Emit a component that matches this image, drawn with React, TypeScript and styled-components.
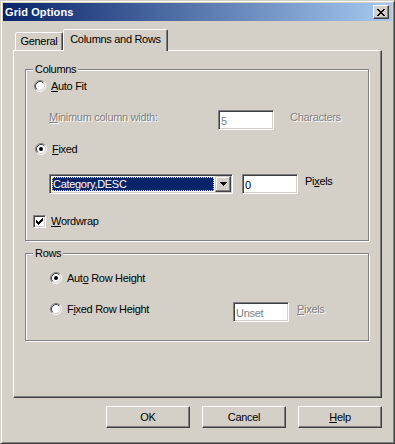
import React from "react";
import styled, { createGlobalStyle } from "styled-components";

const GlobalStyle = createGlobalStyle`
  html, body { margin: 0; padding: 0; background: #D4D0C8; }
  body { font-family: "Liberation Sans", Arial, sans-serif; font-size: 11px; }
`;

const Window = styled.div`
  width: 395px;
  height: 444px;
  box-sizing: border-box;
  border: 1px solid;
  border-color: #D4D0C8 #404040 #404040 #D4D0C8;
  box-shadow: inset 1px 1px 0 #fff, inset -1px -1px 0 #808080;
  padding: 2px;
  background: #D4D0C8;
  display: flex;
  flex-direction: column;
  font-family: "Liberation Sans", Arial, sans-serif;
  font-size: 11px;
  line-height: 13px;
  letter-spacing: -0.3px;
  color: #000;
`;

const TitleBar = styled.div`
  height: 18px;
  flex: none;
  display: flex;
  align-items: center;
  justify-content: space-between;
  padding: 0 3px 0 2px;
  background: linear-gradient(to right, #0A246A, #A6CAF0);
`;

const Title = styled.span`
  color: #fff;
  font-weight: bold;
  font-size: 11px;
  line-height: 13px;
  letter-spacing: 0.1px;
`;

const CloseButton = styled.div`
  box-sizing: border-box;
  width: 16px;
  height: 14px;
  border: 1px solid;
  border-color: #fff #404040 #404040 #fff;
  box-shadow: inset -1px -1px 0 #808080, inset 1px 1px 0 #D4D0C8;
  background: #D4D0C8;
  display: flex;
  align-items: center;
  justify-content: center;
`;

const Body = styled.div`
  flex: 1;
  display: flex;
  flex-direction: column;
  padding: 8px 10px 13px 10px;
  min-height: 0;
`;

const TabRow = styled.div`
  display: flex;
  align-items: flex-end;
  padding-left: 2px;
  flex: none;
`;

const Tab = styled.div<{ $active?: boolean; $w: number }>`
  box-sizing: border-box;
  width: ${(p) => p.$w}px;
  height: ${(p) => (p.$active ? 22 : 18)}px;
  margin-bottom: ${(p) => (p.$active ? -1 : 0)}px;
  padding-bottom: ${(p) => (p.$active ? 2 : 0)}px;
  border: 1px solid;
  border-bottom: none;
  border-color: #fff #404040 transparent #fff;
  border-radius: 2px 2px 0 0;
  box-shadow: inset -1px 0 0 #808080;
  background: #D4D0C8;
  display: flex;
  align-items: center;
  justify-content: center;
  position: relative;
  z-index: ${(p) => (p.$active ? 2 : 1)};
`;

const Panel = styled.div`
  flex: 1;
  box-sizing: border-box;
  border: 1px solid;
  border-color: #fff #404040 #404040 #fff;
  box-shadow: inset -1px -1px 0 #808080;
  padding: 18px 12px 0 11px;
  display: flex;
  flex-direction: column;
  gap: 12px;
`;

const Group = styled.div<{ $pb: number }>`
  position: relative;
  border: 1px solid #808080;
  box-shadow: inset 1px 1px 0 #fff, 1px 1px 0 #fff;
  display: flex;
  flex-direction: column;
  padding-bottom: ${(p) => p.$pb}px;
`;

const Legend = styled.span`
  position: absolute;
  top: -7px;
  left: 7px;
  padding: 0 2px;
  background: #D4D0C8;
  line-height: 13px;
`;

const Row = styled.div<{ $mt: number; $pl: number }>`
  display: flex;
  align-items: flex-start;
  margin-top: ${(p) => p.$mt}px;
  padding-left: ${(p) => p.$pl}px;
  min-height: 13px;
`;

const OptionLabel = styled.span<{ $w?: number }>`
  margin-left: 5px;
  line-height: 13px;
  white-space: nowrap;
  ${(p) => (p.$w ? `width: ${p.$w}px;` : "")}
`;

const Text = styled.span<{ $w?: number; $ml?: number; $mt?: number; $disabled?: boolean }>`
  line-height: 13px;
  white-space: nowrap;
  ${(p) => (p.$w ? `width: ${p.$w}px;` : "")}
  margin-left: ${(p) => p.$ml ?? 0}px;
  margin-top: ${(p) => p.$mt ?? 0}px;
  color: ${(p) => (p.$disabled ? "#808080" : "#000")};
  text-shadow: ${(p) => (p.$disabled ? "1px 1px 0 #fff" : "none")};
`;

const Key = styled.span`
  text-decoration: underline;
  text-underline-offset: 1px;
`;

const Field = styled.div<{ $w: number; $disabled?: boolean; $ml?: number; $mt?: number }>`
  box-sizing: border-box;
  width: ${(p) => p.$w}px;
  height: 20px;
  flex: none;
  margin-left: ${(p) => p.$ml ?? 0}px;
  margin-top: ${(p) => p.$mt ?? 0}px;
  border: 1px solid;
  border-color: #808080 #fff #fff #808080;
  box-shadow: inset 1px 1px 0 #404040, inset -1px -1px 0 #D4D0C8;
  background: #fff;
  padding: 2px 2px 0 2px;
  display: flex;
  align-items: center;
  line-height: 13px;
  color: ${(p) => (p.$disabled ? "#808080" : "#000")};
`;

const Combo = styled.div`
  box-sizing: border-box;
  width: 184px;
  height: 20px;
  flex: none;
  border: 1px solid;
  border-color: #808080 #fff #fff #808080;
  box-shadow: inset 1px 1px 0 #404040, inset -1px -1px 0 #D4D0C8;
  background: #fff;
  padding: 1px;
  display: flex;
  align-items: stretch;
`;

const ComboSelection = styled.div`
  flex: 1;
  margin: 1px;
  box-sizing: border-box;
  background: #0A246A;
  border: 1px dotted #E8E4A0;
  color: #fff;
  line-height: 12px;
  white-space: nowrap;
  overflow: hidden;
`;

const DropButton = styled.div`
  box-sizing: border-box;
  width: 16px;
  flex: none;
  border: 1px solid;
  border-color: #D4D0C8 #404040 #404040 #D4D0C8;
  box-shadow: inset -1px -1px 0 #808080, inset 1px 1px 0 #fff;
  background: #D4D0C8;
  display: flex;
  align-items: center;
  justify-content: center;
`;

const CheckBox = styled.span`
  box-sizing: border-box;
  width: 13px;
  height: 13px;
  flex: none;
  border: 1px solid;
  border-color: #808080 #fff #fff #808080;
  box-shadow: inset 1px 1px 0 #404040, inset -1px -1px 0 #D4D0C8;
  background: #fff;
  display: flex;
  align-items: center;
  justify-content: center;
`;

const RadioSvg = styled.svg`
  flex: none;
  display: block;
`;

const ButtonRow = styled.div`
  display: flex;
  justify-content: flex-end;
  gap: 12px;
  margin-top: 8px;
  flex: none;
`;

const PushButton = styled.button`
  box-sizing: border-box;
  width: 84px;
  height: 22px;
  padding: 0;
  margin: 0;
  font: inherit;
  letter-spacing: inherit;
  color: #000;
  border: 1px solid;
  border-color: #fff #404040 #404040 #fff;
  box-shadow: inset -1px -1px 0 #808080, inset 1px 1px 0 #D4D0C8;
  background: #D4D0C8;
  display: flex;
  align-items: center;
  justify-content: center;
  line-height: 13px;
`;

const Radio = ({ checked }: { checked?: boolean }) => (
  <RadioSvg width="12" height="12" viewBox="0 0 12 12">
    <circle cx="6" cy="6" r="4.5" fill="#fff" />
    <path d="M2.11 9.89A5.5 5.5 0 0 1 9.89 2.11" stroke="#808080" fill="none" />
    <path d="M9.89 2.11A5.5 5.5 0 0 1 2.11 9.89" stroke="#fff" fill="none" />
    <path d="M2.82 9.18A4.5 4.5 0 0 1 9.18 2.82" stroke="#404040" fill="none" />
    <path d="M9.18 2.82A4.5 4.5 0 0 1 2.82 9.18" stroke="#D4D0C8" fill="none" />
    {checked && <circle cx="6" cy="6" r="2" fill="#000" />}
  </RadioSvg>
);

const CheckMark = () => (
  <svg width="7" height="7" viewBox="0 0 7 7" shapeRendering="crispEdges">
    <path
      fill="#000"
      d="M6 0h1v1H6z M5 1h2v1H5z M0 2h1v1H0z M4 2h3v1H4z M0 3h2v1H0z M3 3h3v1H3z M0 4h5v1H0z M1 5h3v1H1z M2 6h1v1H2z"
    />
  </svg>
);

const CloseGlyph = () => (
  <svg width="8" height="7" viewBox="0 0 8 7" shapeRendering="crispEdges">
    <path
      fill="#000"
      d="M0 0h2v1H0z M6 0h2v1H6z M1 1h2v1H1z M5 1h2v1H5z M2 2h4v1H2z M3 3h2v1H3z M2 4h4v1H2z M1 5h2v1H1z M5 5h2v1H5z M0 6h2v1H0z M6 6h2v1H6z"
    />
  </svg>
);

const DownArrow = () => (
  <svg width="7" height="4" viewBox="0 0 7 4" shapeRendering="crispEdges">
    <path fill="#000" d="M0 0h7v1H0z M1 1h5v1H1z M2 2h3v1H2z M3 3h1v1H3z" />
  </svg>
);

export default function App() {
  return (
    <>
      <GlobalStyle />
      <Window>
        <TitleBar>
          <Title>Grid Options</Title>
          <CloseButton>
            <CloseGlyph />
          </CloseButton>
        </TitleBar>
        <Body>
          <TabRow>
            <Tab $w={48}>General</Tab>
            <Tab $w={105} $active>
              Columns and Rows
            </Tab>
          </TabRow>
          <Panel>
            <Group $pb={12}>
              <Legend>Columns</Legend>
              <Row $mt={10} $pl={8}>
                <Radio />
                <OptionLabel>
                  <Key>A</Key>uto Fit
                </OptionLabel>
              </Row>
              <Row $mt={17} $pl={23}>
                <Text $w={169} $mt={1} $disabled>
                  <Key>M</Key>inimum column width:
                </Text>
                <Field $w={56} $disabled>
                  5
                </Field>
                <Text $ml={16} $mt={1} $disabled>
                  Characters
                </Text>
              </Row>
              <Row $mt={13} $pl={9}>
                <Radio checked />
                <OptionLabel>
                  <Key>F</Key>ixed
                </OptionLabel>
              </Row>
              <Row $mt={18} $pl={23}>
                <Combo>
                  <ComboSelection>Category,DESC</ComboSelection>
                  <DropButton>
                    <DownArrow />
                  </DropButton>
                </Combo>
                <Field $w={56} $ml={9}>
                  0
                </Field>
                <Text $ml={7} $mt={1}>
                  Pi<Key>x</Key>els
                </Text>
              </Row>
              <Row $mt={21} $pl={7}>
                <CheckBox>
                  <CheckMark />
                </CheckBox>
                <OptionLabel>
                  <Key>W</Key>ordwrap
                </OptionLabel>
              </Row>
            </Group>
            <Group $pb={18}>
              <Legend>Rows</Legend>
              <Row $mt={18} $pl={24}>
                <Radio checked />
                <OptionLabel>
                  Aut<Key>o</Key> Row Height
                </OptionLabel>
              </Row>
              <Row $mt={18} $pl={24}>
                <Radio />
                <OptionLabel $w={166}>
                  F<Key>i</Key>xed Row Height
                </OptionLabel>
                <Field $w={56} $mt={-1} $disabled>
                  Unset
                </Field>
                <Text $ml={8} $disabled>
                  <Key>P</Key>ixels
                </Text>
              </Row>
            </Group>
          </Panel>
          <ButtonRow>
            <PushButton>OK</PushButton>
            <PushButton>Cancel</PushButton>
            <PushButton>
              <Key>H</Key>elp
            </PushButton>
          </ButtonRow>
        </Body>
      </Window>
    </>
  );
}
